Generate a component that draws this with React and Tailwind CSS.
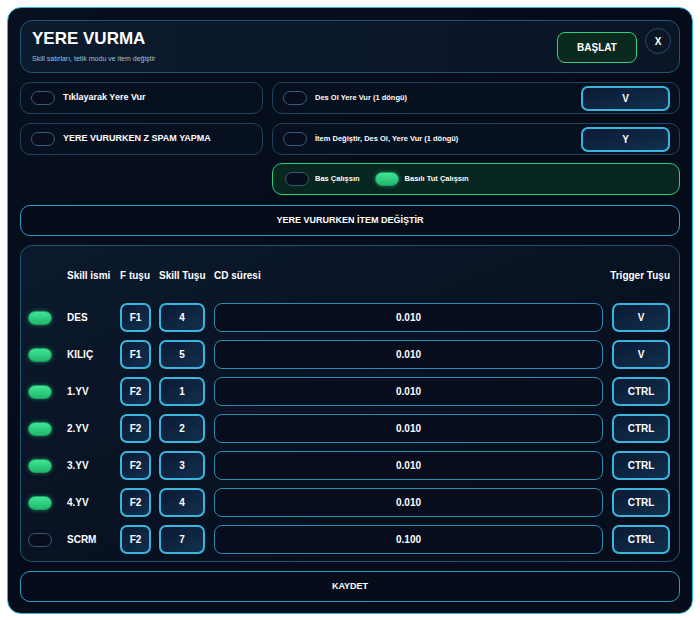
import React, { useState } from "react";

const skills = [
  { name: "DES", f: "F1", key: "4", cd: "0.010", trig: "V", on: true },
  { name: "KILIÇ", f: "F1", key: "5", cd: "0.010", trig: "V", on: true },
  { name: "1.YV", f: "F2", key: "1", cd: "0.010", trig: "CTRL", on: true },
  { name: "2.YV", f: "F2", key: "2", cd: "0.010", trig: "CTRL", on: true },
  { name: "3.YV", f: "F2", key: "3", cd: "0.010", trig: "CTRL", on: true },
  { name: "4.YV", f: "F2", key: "4", cd: "0.010", trig: "CTRL", on: true },
  { name: "SCRM", f: "F2", key: "7", cd: "0.100", trig: "CTRL", on: false },
];

const Toggle = ({ on, onClick }) => (
  <button
    onClick={onClick}
    className={
      on
        ? "w-6 h-[14px] shrink-0 rounded-full border border-[#1f9d5c] bg-gradient-to-b from-[#3ee596] to-[#1fb86b] shadow-[0_0_4px_rgba(52,211,153,0.5)]"
        : "w-6 h-[14px] shrink-0 rounded-full border border-[#3a5a78] bg-[#070d1c]"
    }
  />
);

const KeyBtn = ({ children, className = "" }) => (
  <button
    className={
      "h-full rounded-[7px] border-2 border-[#3ab6de] bg-gradient-to-br from-[#0a1a33] to-[#12304f] text-white font-bold text-[10px] " +
      className
    }
  >
    {children}
  </button>
);

const App = () => {
  const [rows, setRows] = useState(skills);
  const [tikla, setTikla] = useState(false);
  const [spam, setSpam] = useState(false);
  const [desOl, setDesOl] = useState(false);
  const [itemDeg, setItemDeg] = useState(false);
  const [basili, setBasili] = useState(true);

  const flip = (i) => {
    const next = [...rows];
    next[i] = { ...next[i], on: !next[i].on };
    setRows(next);
  };

  return (
    <div className="w-[700px] h-[620px] bg-white pt-[7px] pl-[7px] font-['Liberation_Sans',Arial,sans-serif]">
      <div className="w-[686px] h-[607px] rounded-[14px] border border-[#2bb8da] bg-gradient-to-br from-[#07101f] via-[#050b18] to-[#060c1a] px-[12px] pt-[12px] flex flex-col">
        {/* header */}
        <div className="h-[53px] shrink-0 rounded-[12px] border border-[#1f5574] bg-gradient-to-r from-[#0b1a2d] to-[#0a1526] flex items-center pl-[11px] pr-[8px]">
          <div className="flex-1">
            <h1 className="text-white font-bold text-[17px] leading-[20px]">YERE VURMA</h1>
            <p className="text-[#9cc3dc] text-[7px] mt-[5px]">Skill satırları, tetik modu ve item değiştir</p>
          </div>
          <button className="w-[80px] h-[31px] mt-[1px] rounded-[8px] border border-[#35d07f] bg-[#0a2a1f] text-white font-bold text-[10px]">
            BAŞLAT
          </button>
          <button className="w-[26px] h-[26px] ml-[8px] -mt-[11px] rounded-full border border-[#2a4d68] text-white font-bold text-[10px]">
            X
          </button>
        </div>

        {/* options */}
        <div className="grid grid-cols-[243px_1fr] gap-x-[9px] gap-y-[9px] mt-[9px]">
          <div className="h-[32px] rounded-[10px] border border-[#1d4560] bg-[#07101f] flex items-center pl-[10px] gap-[8px]">
            <Toggle on={tikla} onClick={() => setTikla(!tikla)} />
            <span className="text-white font-bold text-[9px]">Tıklayarak Yere Vur</span>
          </div>
          <div className="h-[32px] rounded-[10px] border border-[#1d4560] bg-[#07101f] flex items-center pl-[10px] pr-[9px] gap-[8px]">
            <Toggle on={desOl} onClick={() => setDesOl(!desOl)} />
            <span className="text-white font-bold text-[7.5px] flex-1">Des Ol Yere Vur (1 döngü)</span>
            <KeyBtn className="w-[89px] !h-[25px] text-[9px]">V</KeyBtn>
          </div>
          <div className="h-[32px] rounded-[10px] border border-[#1d4560] bg-[#07101f] flex items-center pl-[10px] gap-[8px]">
            <Toggle on={spam} onClick={() => setSpam(!spam)} />
            <span className="text-white font-bold text-[9px]">YERE VURURKEN Z SPAM YAPMA</span>
          </div>
          <div className="h-[32px] rounded-[10px] border border-[#1d4560] bg-[#07101f] flex items-center pl-[10px] pr-[9px] gap-[8px]">
            <Toggle on={itemDeg} onClick={() => setItemDeg(!itemDeg)} />
            <span className="text-white font-bold text-[7.5px] flex-1">İtem Değiştir, Des Ol, Yere Vur (1 döngü)</span>
            <KeyBtn className="w-[89px] !h-[25px] text-[9px]">Y</KeyBtn>
          </div>
          <div />
          <div className="h-[32px] -mt-[1px] rounded-[10px] border border-[#2fcf7c] bg-[#072620] flex items-center pl-[12px] gap-[6px]">
            <Toggle on={!basili} onClick={() => setBasili(false)} />
            <span className="text-white font-bold text-[7.5px] mr-[9px]">Bas Çalışsın</span>
            <Toggle on={basili} onClick={() => setBasili(true)} />
            <span className="text-white font-bold text-[7.5px]">Basılı Tut Çalışsın</span>
          </div>
        </div>

        <button className="h-[31px] shrink-0 mt-[10px] rounded-[10px] border border-[#2b9cc4] bg-[#060c1a] text-white font-bold text-[9px]">
          YERE VURURKEN İTEM DEĞİŞTİR
        </button>

        {/* skills */}
        <div className="h-[317px] shrink-0 mt-[9px] rounded-[12px] border border-[#1f5574] bg-gradient-to-br from-[#0b1a2d] via-[#081222] to-[#060c1a] pl-[7px] pr-[9px] pt-[22px]">
          <div className="flex items-center h-[14px] text-white font-bold text-[10px]">
            <div className="w-6" />
            <div className="w-[15px]" />
            <div className="w-[53px]">Skill ismi</div>
            <div className="w-[39px]">F tuşu</div>
            <div className="w-[55px]">Skill Tuşu</div>
            <div className="flex-1">CD süresi</div>
            <div className="w-[62px] text-right">Trigger Tuşu</div>
          </div>
          <div className="flex flex-col gap-[8px] mt-[21px]">
            {rows.map((s, i) => (
              <div key={i} className="flex items-center h-[29px]">
                <Toggle on={s.on} onClick={() => flip(i)} />
                <div className="w-[15px]" />
                <div className="w-[53px] text-white font-bold text-[10px]">{s.name}</div>
                <KeyBtn className="w-[31px]">{s.f}</KeyBtn>
                <div className="w-[8px]" />
                <KeyBtn className="w-[46px]">{s.key}</KeyBtn>
                <div className="w-[9px]" />
                <div className="flex-1 h-full rounded-[8px] border border-[#2a8cb0] bg-[#070d1c] flex items-center justify-center text-white font-bold text-[10px]">
                  {s.cd}
                </div>
                <div className="w-[9px]" />
                <KeyBtn className="w-[58px]">{s.trig}</KeyBtn>
              </div>
            ))}
          </div>
        </div>

        <button className="h-[31px] shrink-0 mt-[9px] rounded-[10px] border border-[#2b9cc4] bg-[#060c1a] text-white font-bold text-[9px]">
          KAYDET
        </button>
      </div>
    </div>
  );
};

export default App;
